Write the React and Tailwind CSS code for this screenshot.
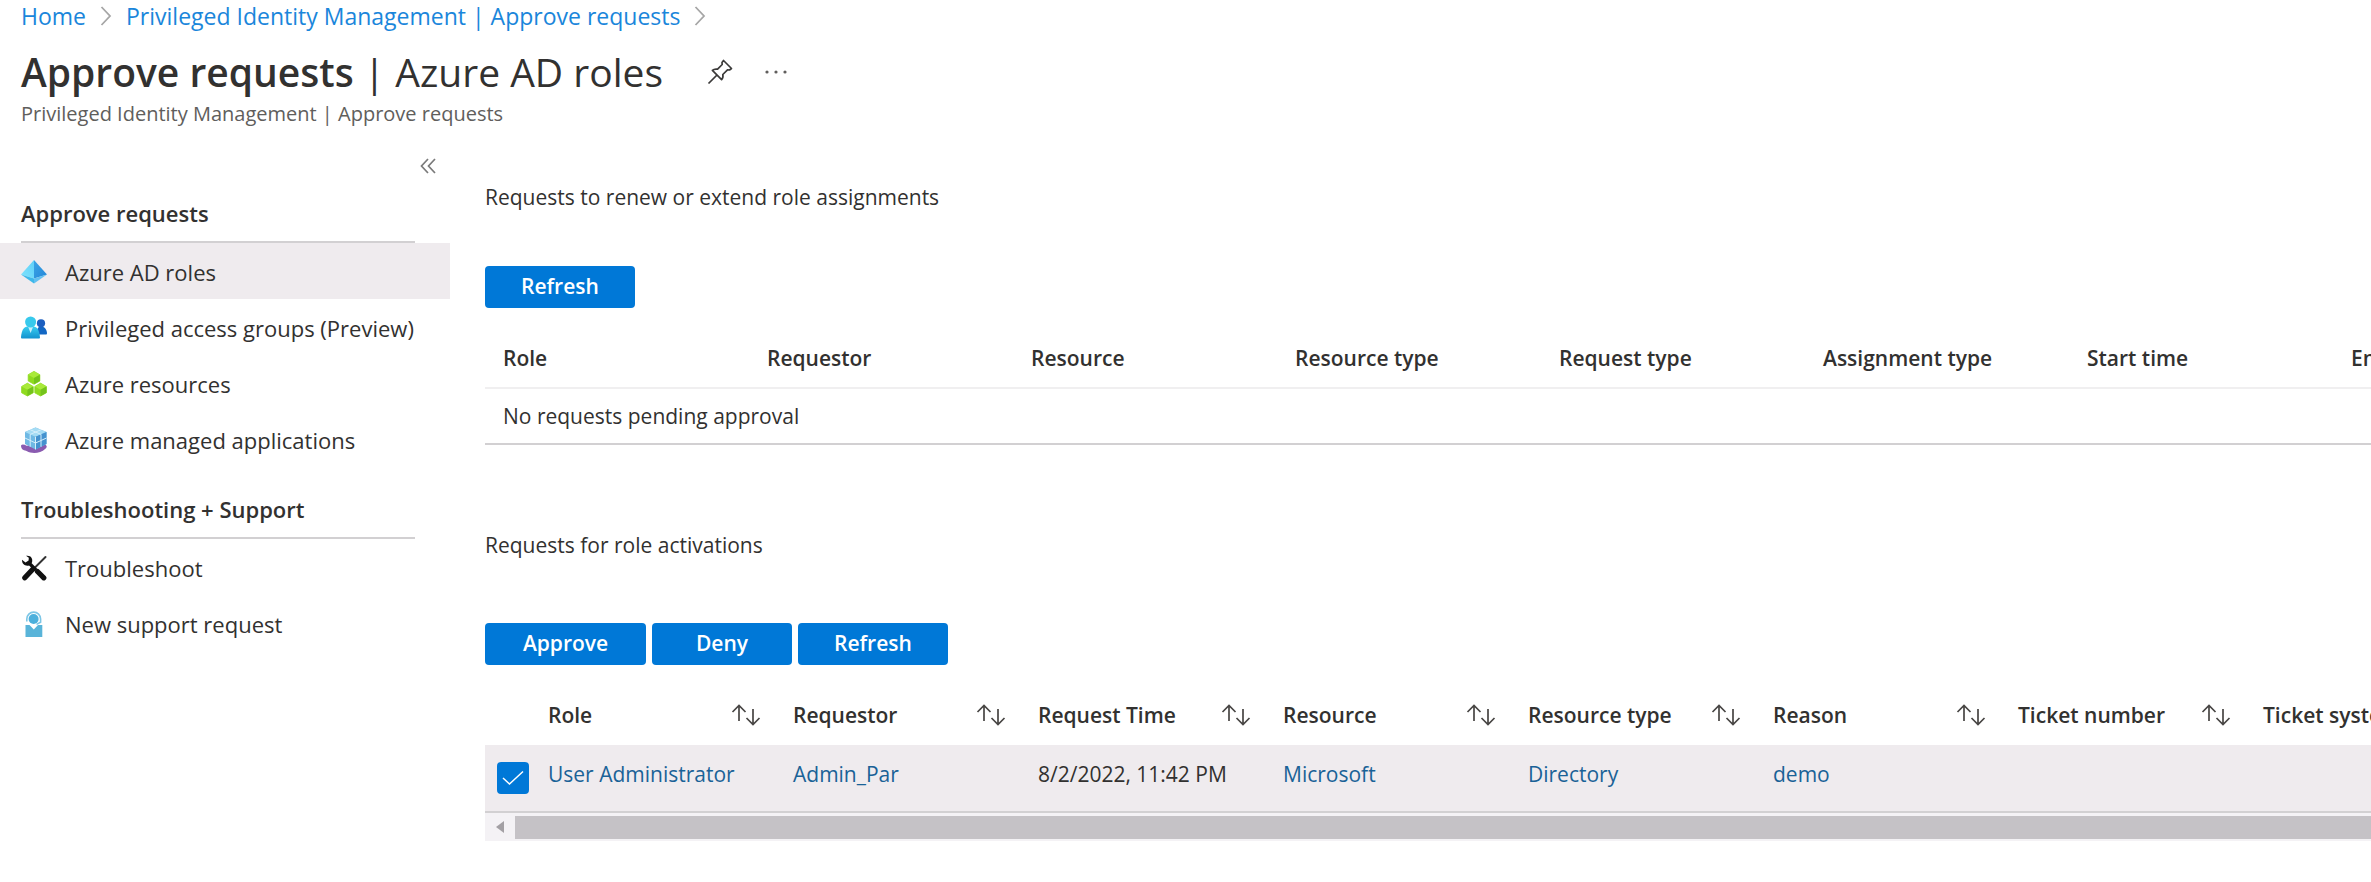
const navLink = 'flex h-14 items-center gap-[18px] pt-0.5 pl-[21px] text-[#323130]';
const primaryButton =
  'h-[42px] rounded bg-[#0078d7] px-9 pb-0.5 text-[21px] leading-7 font-semibold text-white';

function Chevron() {
  return (
    <svg className="h-[22px] w-3 shrink-0" viewBox="0 0 12 22" fill="none" stroke="#a6a6a6" strokeWidth="1.8" aria-hidden="true">
      <path d="M1.5 2 L10 11 L1.5 20" />
    </svg>
  );
}

function PinIcon() {
  return (
    <svg className="h-[26px] w-[26px]" viewBox="0 0 26 26" fill="none" stroke="#3b3a39" strokeWidth="1.7" strokeLinejoin="round" aria-hidden="true">
      <path d="M16.5 1.5 L24.5 9.5 L22.5 11 L20.5 10.8 L15.8 15.5 C16.3 17.6 15.8 19.4 14.6 20.6 L5.4 11.4 C6.8 10.1 8.6 9.8 10.6 10.2 L15.2 5.5 L15 3.5 Z" />
      <path d="M10 16 L1.5 24.5" />
    </svg>
  );
}

function CollapseIcon() {
  return (
    <svg className="h-4 w-4" viewBox="0 0 16 16" fill="none" stroke="#7a7a7a" strokeWidth="1.7" aria-hidden="true">
      <path d="M8 1 L1.5 8 L8 15 M15 1 L8.5 8 L15 15" />
    </svg>
  );
}

function PyramidIcon() {
  return (
    <svg className="h-[26px] w-[26px] shrink-0" viewBox="0 0 26 26" aria-hidden="true">
      <defs>
        <linearGradient id="pyramidLeft" x1="1" y1="0" x2="0" y2="1">
          <stop offset="0" stopColor="#5fd0f8" />
          <stop offset="1" stopColor="#7fe3fd" />
        </linearGradient>
        <linearGradient id="pyramidRight" x1="0" y1="0" x2="1" y2="1">
          <stop offset="0" stopColor="#3aa5e6" />
          <stop offset="1" stopColor="#2486d8" />
        </linearGradient>
      </defs>
      <path d="M13 1 L0 15.5 L13 19.5 Z" fill="url(#pyramidLeft)" />
      <path d="M13 1 L26 15.5 L13 19.5 Z" fill="url(#pyramidRight)" />
      <path d="M0 15.5 L13 19.5 V24.5 Z" fill="#3db8ea" />
      <path d="M26 15.5 L13 19.5 V24.5 Z" fill="#62c0f0" />
    </svg>
  );
}

function PeopleIcon() {
  return (
    <svg className="h-[26px] w-[26px] shrink-0" viewBox="0 0 26 26" aria-hidden="true">
      <defs>
        <linearGradient id="person" x1="0" y1="0" x2="0" y2="1">
          <stop offset="0" stopColor="#38cdf0" />
          <stop offset="1" stopColor="#1292cf" />
        </linearGradient>
      </defs>
      <path d="M16 19.5 C15.5 14 17 11.5 20 11.5 C23.5 11.5 25.5 14 26 18 C26 19 25.6 19.5 24.8 19.5 Z" fill="#1267c4" />
      <circle cx="20" cy="8.3" r="4.1" fill="#1c5fc0" />
      <path d="M1.2 23.5 C0.4 23.5 0 23 0 22.2 C0.5 15.5 3 11.5 6.5 11.5 H12.5 C16 11.5 18.3 15 19 22.2 C19 23 18.6 23.5 17.8 23.5 Z" fill="url(#person)" />
      <path d="M7.2 12 L9.6 18 L12 12 Z" fill="#c9eefb" />
      <circle cx="9.6" cy="7" r="5.5" fill="#38c9ec" />
    </svg>
  );
}

function Cube({ x, y }) {
  return (
    <g transform={`translate(${x} ${y})`} strokeLinejoin="round" strokeWidth="0.8">
      <path d="M6.2 0.4 L12 3.7 V10 L6.2 13.2 L0.4 10 V3.7 Z" fill="#8fdb1f" stroke="#8fdb1f" />
      <path d="M6.2 0.4 L12 3.7 L6.2 6.9 L0.4 3.7 Z" fill="#a9ea3a" />
      <path d="M12 3.7 V10 L6.2 13.2 V6.9 Z" fill="#74c31c" />
    </g>
  );
}

function CubesIcon() {
  return (
    <svg className="h-[26px] w-[26px] shrink-0" viewBox="0 0 26 26" aria-hidden="true">
      <Cube x={6.8} y={0} />
      <Cube x={0.2} y={11.8} />
      <Cube x={13.4} y={11.8} />
    </svg>
  );
}

function ManagedAppIcon() {
  return (
    <svg className="h-[26px] w-[26px] shrink-0" viewBox="0 0 26 26" aria-hidden="true">
      <path d="M0 18.5 C1 17 3.5 17.6 5.5 18.8 L24 17.5 C26.4 18.5 26 20.5 24.4 21.8 C19 27 10 26.6 6 24.2 C4.5 23.4 3.5 23.8 2 22.8 C0.5 21.8 0 20 0 18.5 Z" fill="#8a5bb0" />
      <path d="M14.5 0.5 L25.5 5 V17 L14.5 22.5 L4 17 V5 Z" fill="#6fb9e4" />
      <path d="M14.5 0.5 L25.5 5 L14.5 9.8 L4 5 Z" fill="#a5dcf4" />
      <path d="M25.5 5 V17 L14.5 22.5 V9.8 Z" fill="#4592cf" />
      <path d="M4 11 L14.5 16 L25.5 11 M9.2 7.4 V19.8 M20 7.4 V19.8 M9.2 2.7 L20 7.4 M20 2.7 L9.2 7.4 M14.5 9.8 V22.5" fill="none" stroke="#d5effb" strokeWidth="1" />
    </svg>
  );
}

function ToolsIcon() {
  return (
    <svg className="h-[26px] w-[26px] shrink-0" viewBox="0 0 26 26" aria-hidden="true">
      <path d="M24.5 2 L13 13.5" stroke="#333" strokeWidth="2" fill="none" strokeLinecap="round" />
      <path d="M12 14 L3.8 22.8" stroke="#111" strokeWidth="5.2" fill="none" strokeLinecap="round" />
      <path d="M8 8 L15 15" stroke="#111" strokeWidth="3.4" fill="none" />
      <path d="M16.5 16.5 L22.8 22.8" stroke="#111" strokeWidth="5.2" fill="none" strokeLinecap="round" />
      <path d="M5 0.8 C9.5 0 12.2 3 11 7.5 L8 10.5 C4 11.4 0.8 9 1 4.8 L4.5 7.4 L7.6 5.6 L7.8 2.8 Z" fill="#111" />
    </svg>
  );
}

function SupportIcon() {
  return (
    <svg className="h-[26px] w-[26px] shrink-0" viewBox="0 0 26 26" aria-hidden="true">
      <circle cx="12.6" cy="8" r="5" fill="#4cb0dc" />
      <path d="M5.8 10.5 V8 A6.9 6.9 0 0 1 19.6 8 V11.2 L15.5 13.4" fill="none" stroke="#7cc6e6" strokeWidth="1.6" />
      <path d="M4.5 14 H8.5 L12.8 18.5 L17 14 H21.3 V26 H4.5 Z" fill="#59b4d9" />
    </svg>
  );
}

function SortIcon() {
  return (
    <svg className="h-[22px] w-[30px]" viewBox="0 0 30 22" fill="none" stroke="#484644" strokeWidth="1.7" aria-hidden="true">
      <path d="M8 17 V1.5 M1.5 8 L8 1.5 L14.5 8" />
      <path d="M22 5 V20.5 M15.5 14 L22 20.5 L28.5 14" />
    </svg>
  );
}

const approveItems = [
  { label: 'Azure AD roles', Icon: PyramidIcon, selected: true },
  { label: 'Privileged access groups (Preview)', Icon: PeopleIcon },
  { label: 'Azure resources', Icon: CubesIcon },
  { label: 'Azure managed applications', Icon: ManagedAppIcon },
];
const supportItems = [
  { label: 'Troubleshoot', Icon: ToolsIcon },
  { label: 'New support request', Icon: SupportIcon },
];

const renewColumns = ['Role', 'Requestor', 'Resource', 'Resource type', 'Request type', 'Assignment type', 'Start time', 'End time'];
const activationColumns = ['Role', 'Requestor', 'Request Time', 'Resource', 'Resource type', 'Reason', 'Ticket number', 'Ticket system'];
const activation = ['User Administrator', 'Admin_Par', '8/2/2022, 11:42 PM', 'Microsoft', 'Directory', 'demo', '', ''];

function NavSection({ title, items }) {
  return (
    <section>
      <h2 className="mr-[35px] ml-[21px] h-[46px] border-b-2 border-[#d2d0d2] pt-0.5 leading-7 font-semibold text-[#323130]">{title}</h2>
      <ul>
        {items.map(({ label, Icon, selected }) => (
          <li key={label} className={selected ? 'bg-[#efebee]' : ''}>
            <a href="#" className={navLink} aria-current={selected ? 'page' : undefined}>
              <Icon />
              <span className="whitespace-nowrap">{label}</span>
            </a>
          </li>
        ))}
      </ul>
    </section>
  );
}

export default function App() {
  return (
    <div className="min-h-screen overflow-hidden bg-white font-['Open_Sans','Noto_Sans',sans-serif] text-[21px] leading-7 text-[#323130]">
      <header className="pl-[21px]">
        <nav aria-label="Breadcrumb" className="flex h-8 items-center gap-[14px] text-[23px] leading-8 text-[#1a86db]">
          <a href="#">Home</a>
          <Chevron />
          <a href="#">Privileged Identity Management | Approve requests</a>
          <Chevron />
        </nav>
        <div className="mt-3 flex h-14 items-center">
          <h1 className="text-[39px] leading-[56px]">
            <span className="font-semibold">Approve requests</span> | Azure AD roles
          </h1>
          <button type="button" aria-label="Pin" className="ml-11"><PinIcon /></button>
          <button type="button" aria-label="More options" className="ml-8">
            <svg className="h-4 w-[22px]" viewBox="0 0 22 16" fill="#605e5c" aria-hidden="true">
              <circle cx="2" cy="8" r="1.6" /><circle cx="11" cy="8" r="1.6" /><circle cx="20" cy="8" r="1.6" />
            </svg>
          </button>
        </div>
        <p className="text-[20px] leading-7 text-[#605e5c]">Privileged Identity Management | Approve requests</p>
      </header>

      <div className="flex pt-7">
        <aside className="w-[450px] shrink-0 text-[22px]">
          <div className="flex h-[41px] justify-end pr-[14px]">
            <button type="button" aria-label="Collapse menu" className="h-5"><CollapseIcon /></button>
          </div>
          <nav aria-label="Sections" className="flex flex-col gap-[26px]">
            <NavSection title="Approve requests" items={approveItems} />
            <NavSection title="Troubleshooting + Support" items={supportItems} />
          </nav>
        </aside>

        <main className="ml-[35px] min-w-0 flex-1 overflow-hidden pt-[27px]">
          <section>
            <h2>Requests to renew or extend role assignments</h2>
            <div className="mt-[55px]">
              <button type="button" className={primaryButton}>Refresh</button>
            </div>
            <table className="mt-5 w-[2112px] table-fixed text-left">
              <thead>
                <tr className="h-[60px] border-b-2 border-[#f0eff0]">
                  {renewColumns.map((c) => (
                    <th key={c} className="pl-[18px] font-semibold">{c}</th>
                  ))}
                </tr>
              </thead>
              <tbody>
                <tr className="h-14 border-b-2 border-[#d2d0d2]">
                  <td colSpan={8} className="pl-[18px]">No requests pending approval</td>
                </tr>
              </tbody>
            </table>
          </section>

          <section className="mt-[86px]">
            <h2>Requests for role activations</h2>
            <div className="mt-16 flex gap-1.5">
              <button type="button" className={`${primaryButton} min-w-[161px]`}>Approve</button>
              <button type="button" className={`${primaryButton} min-w-[140px]`}>Deny</button>
              <button type="button" className={primaryButton}>Refresh</button>
            </div>
            <table className="mt-5 w-[2023px] table-fixed text-left">
              <colgroup>
                <col className="w-[63px]" />
                {activationColumns.map((c) => <col key={c} className="w-[245px]" />)}
              </colgroup>
              <thead>
                <tr className="h-[60px]">
                  <td />
                  {activationColumns.map((c) => (
                    <th key={c} className="font-semibold">
                      <button type="button" className="flex w-full items-center justify-between pr-8 whitespace-nowrap">
                        {c}
                        <SortIcon />
                      </button>
                    </th>
                  ))}
                </tr>
              </thead>
              <tbody>
                <tr className="h-[67px] border-b-2 border-[#d2d0d2] bg-[#efebee]">
                  <td className="pl-3">
                    <label className="relative block h-8 w-8">
                      <input type="checkbox" defaultChecked aria-label="Select User Administrator" className="peer block h-8 w-8 appearance-none rounded border-2 border-[#0078d7] bg-white checked:bg-[#0078d7]" />
                      <svg className="pointer-events-none absolute inset-0 hidden h-8 w-8 peer-checked:block" viewBox="0 0 32 32" fill="none" stroke="#fff" strokeWidth="1.5" aria-hidden="true">
                        <path d="M6 16 L12.5 22 L26 9.5" />
                      </svg>
                    </label>
                  </td>
                  {activation.map((v, i) => (
                    <td key={activationColumns[i]} className="pb-2 whitespace-nowrap">
                      {i === 2 ? v : v && <a href="#" className="text-[#1a6297]">{v}</a>}
                    </td>
                  ))}
                </tr>
              </tbody>
            </table>
            <div className="flex h-7 items-center bg-[#f4f2f5]">
              <button type="button" aria-label="Scroll left" className="flex w-[30px] justify-center">
                <svg className="h-3 w-2" viewBox="0 0 8 12" fill="#a3a0a4" aria-hidden="true"><path d="M8 0 V12 L0 6 Z" /></svg>
              </button>
              <div className="h-[23px] flex-1 bg-[#c5c2c6]" />
            </div>
          </section>
        </main>
      </div>
    </div>
  );
}
